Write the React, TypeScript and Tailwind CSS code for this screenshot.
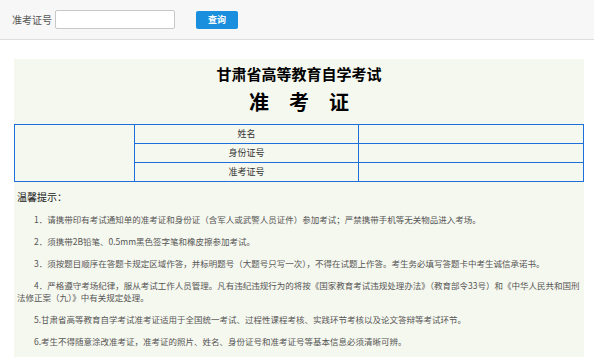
import React from "react";

const tips = [
  "1．请携带印有考试通知单的准考证和身份证（含军人或武警人员证件）参加考试；严禁携带手机等无关物品进入考场。",
  "2．须携带2B铅笔、0.5mm黑色签字笔和橡皮擦参加考试。",
  "3．须按题目顺序在答题卡规定区域作答，并标明题号（大题号只写一次），不得在试题上作答。考生务必填写答题卡中考生诚信承诺书。",
  "4．严格遵守考场纪律，服从考试工作人员管理。凡有违纪违规行为的将按《国家教育考试违规处理办法》（教育部令33号）和《中华人民共和国刑法修正案（九）》中有关规定处理。",
  "5.甘肃省高等教育自学考试准考证适用于全国统一考试、过程性课程考核、实践环节考核以及论文答辩等考试环节。",
  "6.考生不得随意涂改准考证，准考证的照片、姓名、身份证号和准考证号等基本信息必须清晰可辨。",
];

const rows = ["姓名", "身份证号", "准考证号"];

const App = () => {
  return (
    <div
      className="w-[594px] h-[360px] bg-white overflow-hidden"
      style={{ fontFamily: '"Noto Sans CJK SC", "Noto Sans", sans-serif' }}
    >
      {/* search bar */}
      <div className="h-[40px] bg-[#f7f7f7] border-b border-[#dedede] flex items-center pl-[12px]">
        <span className="text-[10px] text-[#555]">准考证号</span>
        <input
          className="ml-[3px] w-[120px] h-[19px] bg-white border border-[#c8c8c8] rounded-[2px] outline-none"
          type="text"
        />
        <button className="ml-[21px] w-[42px] h-[18px] bg-[#1a8fdd] rounded-[2px] text-white text-[9px] font-bold leading-[18px]">
          查询
        </button>
      </div>

      <div className="ml-[14px] mt-[19px] w-[570px] bg-[#f5f8ef] pb-[10px]">
        <div className="pt-[5px] text-center text-black font-bold">
          <div className="text-[15px] leading-[20px]">甘肃省高等教育自学考试</div>
          <div className="mt-[4px] text-[20px] leading-[28px] tracking-[20px] pl-[20px]">
            准考证
          </div>
        </div>

        <table className="mt-[8px] w-full border-collapse text-[9px] text-[#333]">
          <tbody>
            {rows.map((r, i) => (
              <tr key={r} className="h-[19px]">
                {i === 0 && (
                  <td rowSpan={3} className="w-[120px] border border-[#1d6fdc]"></td>
                )}
                <td className="w-[224px] border border-[#1d6fdc] text-center leading-[18px] p-0">
                  {r}
                </td>
                <td className="border border-[#1d6fdc] p-0"></td>
              </tr>
            ))}
          </tbody>
        </table>

        <div className="pl-[3px]">
          <div className="mt-[8px] text-[10px] leading-[14px] text-[#222]">温馨提示：</div>
          <div className="mt-[9px] flex flex-col gap-[10px] text-[8.5px] leading-[12px] text-[#555]">
            {tips.map((t) => (
              <p key={t} className="indent-[17px]">
                {t}
              </p>
            ))}
          </div>
        </div>
      </div>
    </div>
  );
};

export default App;
